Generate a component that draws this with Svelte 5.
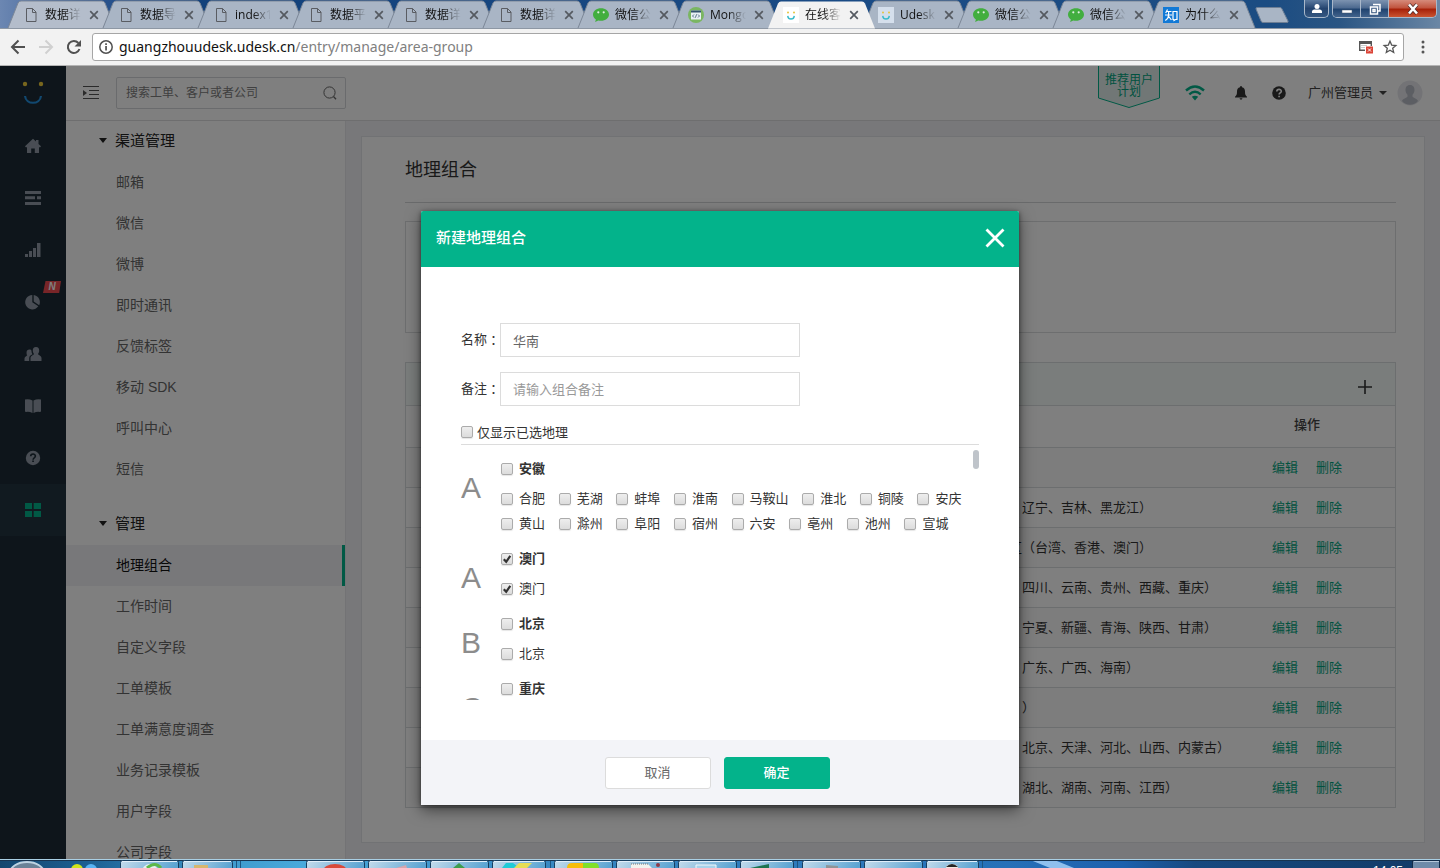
<script>
  const tabs = [
    { icon: 'file', title: '数据详情' },
    { icon: 'file', title: '数据导出' },
    { icon: 'file', title: 'index1.html' },
    { icon: 'file', title: '数据平台' },
    { icon: 'file', title: '数据详情' },
    { icon: 'file', title: '数据详情' },
    { icon: 'wechat', title: '微信公众' },
    { icon: 'mongo', title: 'Mongo' },
    { icon: 'udesk', title: '在线客服', active: true },
    { icon: 'udesk', title: 'Udesk' },
    { icon: 'wechat', title: '微信公众' },
    { icon: 'wechat', title: '微信公众' },
    { icon: 'zhihu', title: '为什么' }
  ];

  const rail = ['home', 'list', 'bars', 'pie', 'users', 'book', 'help', 'grid'];

  const menu = [
    { title: '渠道管理', items: ['邮箱', '微信', '微博', '即时通讯', '反馈标签', '移动 SDK', '呼叫中心', '短信'] },
    { title: '管理', items: ['地理组合', '工作时间', '自定义字段', '工单模板', '工单满意度调查', '业务记录模板', '用户字段', '公司字段'] }
  ];
  const current = '地理组合';

  const rows = [
    { lead: '', text: '' },
    { lead: '', text: '辽宁、吉林、黑龙江）' },
    { lead: '区', text: '（台湾、香港、澳门）' },
    { lead: '', text: '四川、云南、贵州、西藏、重庆）' },
    { lead: '', text: '宁夏、新疆、青海、陕西、甘肃）' },
    { lead: '', text: '广东、广西、海南）' },
    { lead: '', text: '）' },
    { lead: '', text: '北京、天津、河北、山西、内蒙古）' },
    { lead: '', text: '湖北、湖南、河南、江西）' }
  ];

  let groups = $state([
    {
      letter: 'A', name: '安徽', checked: false,
      cities: ['合肥', '芜湖', '蚌埠', '淮南', '马鞍山', '淮北', '铜陵', '安庆', '黄山', '滁州', '阜阳', '宿州', '六安', '亳州', '池州', '宣城']
        .map((name) => ({ name, checked: false }))
    },
    { letter: 'A', name: '澳门', checked: true, cities: [{ name: '澳门', checked: true }] },
    { letter: 'B', name: '北京', checked: false, cities: [{ name: '北京', checked: false }] },
    { letter: 'C', name: '重庆', checked: false, cities: [] }
  ]);

  let name = $state('华南');
  let note = $state('');
  let onlySelected = $state(false);

  const taskButtons = [
    [120, 58], [182, 50], [306, 58], [368, 58], [430, 58], [492, 53], [554, 58],
    [616, 58], [678, 58], [740, 53], [802, 58], [864, 58], [926, 52]
  ];
</script>

<div class="screen">
  <header class="strip">
    <div class="tabs">
      {#each tabs as tab}
        <div class="tab" class:active={tab.active}>
          <svg class="shape" viewBox="0 0 108 28" aria-hidden="true">
            <path d="M0 28 L10 3 Q11 1 13 1 H94 Q96 1 97 3 L107 28 Z" />
            <path class="edge" d="M0 28 L10 3 Q11 1 13 1 H94 Q96 1 97 3 L107 28" />
          </svg>
          <span class="fav">
            {#if tab.icon === 'file'}
              <svg viewBox="0 0 16 16"><path d="M3.5 1.5h6l3.500 3.500v9.500h-9.500z M9.500 1.500v4h3.500" fill="none" stroke="#5a5d63" /></svg>
            {:else if tab.icon === 'wechat'}
              <svg viewBox="0 0 16 16"><path d="M8 1.200c4.400 0 8 2.700 8 6.300s-3.600 6.300-8 6.300c-1 0-1.900-.1-2.700-.4l-3.200 1.500.8-2.500C1.100 11.300 0 9.500 0 7.500 0 3.900 3.600 1.200 8 1.200z" fill="#42ae3f" /><circle cx="5.300" cy="5.300" r="1.100" fill="#dfeee2" /><circle cx="10.700" cy="5.300" r="1.100" fill="#dfeee2" /></svg>
            {:else if tab.icon === 'mongo'}
              <svg viewBox="0 0 16 16"><circle cx="8" cy="8" r="8" fill="#7ab661" /><rect x="3" y="3.500" width="10" height="9" fill="#e9f0f4" /><path d="M3 3.500h10v2h-10z" fill="#33526d" /><path d="M6 7.500L4.500 9 6 10.500M10 7.500L11.500 9 10 10.500M8.600 7.300L7.400 10.700" fill="none" stroke="#33526d" stroke-width=".8" /></svg>
            {:else if tab.icon === 'udesk'}
              <svg viewBox="0 0 16 16"><path d="M0 0h16v16H0z" fill={tab.active ? '#fff' : '#d5dfec'} /><circle cx="5" cy="5.500" r="1" fill="#e6c43c" /><circle cx="11" cy="5.500" r="1" fill="#e6c43c" /><path d="M4.700 8.800c.5 4.300 6.100 4.300 6.600 0" fill="none" stroke="#3cbccb" stroke-width="1.400" /></svg>
            {:else}
              <svg viewBox="0 0 16 16"><path d="M0 0h16v16H0z" fill="#1179d6" /><path d="M4.500 2.500L2.700 6M3.800 4.500h4.700M2 8h7M5.600 4.500V8c0 2.500-1.600 4.500-3.300 5.500M5.800 9.500l2.600 3.500M10 4.500h4v8h-1.500l-1.500 1-.2-1H10z" fill="none" stroke="#fff" stroke-width="1.200" /></svg>
            {/if}
          </span>
          <span class="tab-title">{tab.title}</span>
          <button class="tab-close" aria-label="关闭标签页">
            <svg viewBox="0 0 10 10"><path d="M1.200 1.200l7.600 7.600M8.800 1.200L1.200 8.800" stroke="#555a61" stroke-width="1.700" /></svg>
          </button>
        </div>
      {/each}
      <button class="new-tab" aria-label="新标签页">
        <svg viewBox="0 0 34 16"><path d="M2.500 .5H25q1.500 0 2 1.500l6 12q.5 1.500-1 1.500H8q-1.500 0-2-1.500L1 2Q.5.5 2.500.5z" fill="#a9b5c5" stroke="#6e7f95" /></svg>
      </button>
    </div>
    <div class="window">
      <button class="user" aria-label="用户"><svg viewBox="0 0 12 12"><circle cx="6" cy="3.500" r="2.500" fill="#fff" /><path d="M1 10V8.500q0-1.500 2-2h6q2 .5 2 2V10z" fill="#fff" /></svg></button>
      <div class="controls">
        <button class="min" aria-label="最小化"><svg viewBox="0 0 12 12"><path d="M1 7h10v3H1z" fill="#fff" stroke="#4b5a70" stroke-width=".5" /></svg></button>
        <button class="max" aria-label="还原"><svg viewBox="0 0 12 12"><path d="M4 1.500h7v6.500H9M1.500 4h7v7h-7zM4 6.500h2v2H4z" fill="none" stroke="#fff" stroke-width="1.500" /></svg></button>
        <button class="close" aria-label="关闭"><svg viewBox="0 0 12 12"><path d="M2 1.500l8 9M10 1.500l-8 9" stroke="#4a2b2b" stroke-width="4" /><path d="M2 1.500l8 9M10 1.500l-8 9" stroke="#fff" stroke-width="2.600" /></svg></button>
      </div>
    </div>
  </header>

  <div class="toolbar">
    <button class="nav" aria-label="后退"><svg viewBox="0 0 16 16"><path d="M15 8H2.500M8.500 1.500L2 8l6.500 6.500" fill="none" stroke="#505050" stroke-width="2" /></svg></button>
    <button class="nav" aria-label="前进"><svg viewBox="0 0 16 16"><path d="M1 8h12.500M7.500 1.500L14 8l-6.500 6.500" fill="none" stroke="#d0d0d0" stroke-width="2" /></svg></button>
    <button class="nav" aria-label="刷新"><svg viewBox="0 0 16 16"><path d="M13.500 10A6 6 0 1 1 12.400 4" fill="none" stroke="#505050" stroke-width="2" /><path d="M15 1v6.500H8.500z" fill="#505050" /></svg></button>
    <div class="omnibox">
      <svg class="info" viewBox="0 0 14 14"><circle cx="7" cy="7" r="6.200" fill="none" stroke="#505050" stroke-width="1.500" /><path d="M6.200 6h1.700v4.500H6.200zM6.200 3.200h1.700v1.700H6.200z" fill="#505050" /></svg>
      <span class="url">guangzhouudesk.udesk.cn<span>/entry/manage/area-group</span></span>
      <button class="blocked" aria-label="已拦截弹出式窗口"><svg viewBox="0 0 16 14"><path d="M1.700 2v8.300H7M13.300 2v4" fill="none" stroke="#555" stroke-width="1.400" /><path d="M1 1h13v3H1z" fill="#555" /><path d="M3 5.500h6M3 7.500h4" stroke="#ccc" /><rect x="8" y="6.500" width="7" height="7" fill="#db4437" /><path d="M10 8.500l3 3M13 8.500l-3 3" stroke="#fff" /></svg></button>
      <button class="star" aria-label="收藏"><svg viewBox="0 0 14 14"><path d="M7 1.200l1.700 3.900 4.200.4-3.200 2.800 1 4.200L7 10.300l-3.700 2.200 1-4.200L1.100 5.500l4.200-.4z" fill="none" stroke="#555" stroke-width="1.300" /></svg></button>
    </div>
    <button class="more" aria-label="菜单"><svg viewBox="0 0 4 14"><circle cx="2" cy="2" r="1.500" /><circle cx="2" cy="7" r="1.500" /><circle cx="2" cy="12" r="1.500" /></svg></button>
  </div>

  <div class="page">
    <nav class="rail">
      <a class="logo" href="#home" aria-label="Udesk"><svg viewBox="0 0 24 26"><circle cx="4" cy="4" r="2.200" fill="#f0cd3c" /><circle cx="20" cy="4" r="2.200" fill="#f0cd3c" /><path d="M4 16c1 9 15 9 16 0" fill="none" stroke="#2390e0" stroke-width="2.200" /></svg></a>
      {#each rail as icon}
        <a class="rail-item" class:on={icon === 'grid'} href="#{icon}" aria-label={icon}>
          <svg viewBox="0 0 16 16" fill="currentColor">
            {#if icon === 'home'}
              <path d="M8 .8L11 3.600V2h2.500v4L16 8.300l-.8.9H14V15H9.800v-4.500H6.200V15H2V9.200H.8L0 8.300z" />
            {:else if icon === 'list'}
              <path d="M0 1h16v3H0zM0 6.300h10v3H0zM12 6.300h4v3h-4zM0 12h16v3H0z" />
            {:else if icon === 'bars'}
              <path d="M0 12h3v3H0zM4 9h3v6H4zM8 6h3v9H8zM12 1h3.500v14H12z" />
            {:else if icon === 'pie'}
              <path d="M7.300 1v7.300l6 4A7.200 7.200 0 1 1 7.300 1zM8.700 1a7.200 7.200 0 0 1 5.500 10.200L8.700 7.500z" />
            {:else if icon === 'users'}
              <path d="M11 1c2.300 0 3.300 1.600 3.200 3.700-.1 1.700-.8 2.600-1.200 3.300 0 1 3.500 1.500 3.500 4V15h-11v-3c0-2.500 3.500-3 3.500-4-.4-.7-1.100-1.600-1.200-3.300C7.700 2.600 8.700 1 11 1zM4.500 3.500c1 0 1.700.4 2 1.200 0 1.600.3 2.600 1 3.600-1.800.9-3.300 1.900-3.300 4V15H-.5v-2.500c0-2 2.500-2.300 2.700-3.200C1.500 8.500 1.500 7.300 1.600 6c.1-1.500 1-2.500 2.900-2.500z" />
            {:else if icon === 'book'}
              <path d="M0 1.500q4-.8 7.500 1V15Q4 13.300 1 14 0 14 0 13zM16 1.500q-4-.8-7.500 1V15q3.500-1.700 6.500-1 1 0 1-1z" />
            {:else if icon === 'help'}
              <circle cx="8" cy="8" r="7.200" />
              <path d="M5.700 6.300c0-3 4.700-3 4.700-.2 0 1.900-2.300 1.700-2.300 3.600M7.200 11.300h1.700" fill="none" stroke="#1c2b36" stroke-width="1.600" />
            {:else}
              <path d="M0 1h7v6H0zM8.700 1H16v6H8.700zM0 9h7v6H0zM8.700 9H16v6H8.700z" />
            {/if}
          </svg>
          {#if icon === 'pie'}<span class="badge">N</span>{/if}
        </a>
      {/each}
    </nav>

    <div class="app">
      <div class="topbar">
        <button class="fold" aria-label="收起菜单"><svg viewBox="0 0 16 14"><path d="M0 .5h16M6 4.500h10M6 8.500h10M0 12.500h16" stroke="#555" /><path d="M0 4l4 3-4 3z" fill="#555" /></svg></button>
        <label class="search">
          <input type="text" placeholder="搜索工单、客户或者公司" aria-label="搜索" />
          <svg viewBox="0 0 14 14"><circle cx="6.500" cy="6.500" r="5.600" fill="none" stroke="#666" /><path d="M10.500 10.500L13 13.300" stroke="#666" stroke-width="1.300" /></svg>
        </label>
        <a class="promo" href="#promo">
          <svg viewBox="0 0 62 42" aria-hidden="true"><path d="M.5-1V32L31 41.500 61.500 32V-1z" fill="#e2efec" stroke="#03b38b" /></svg>
          <span>推荐用户<br />计划</span>
        </a>
        <svg class="wifi" viewBox="0 0 20 16"><path d="M1 5.500q9-8 18 0M4.300 9.300q5.700-5 11.400 0" fill="none" stroke="#03b38b" stroke-width="2.400" /><path d="M6.800 11.800q3.200-2.300 6.400 0L10 15.500z" fill="#03b38b" /></svg>
        <svg class="bell" viewBox="0 0 12 14"><path d="M6 0q1 0 1 1.300c2.200.5 3 2.200 3 4.200 0 3 .5 4 2 5.200V11.500H0v-.8C1.500 9.500 2 8.500 2 5.500c0-2 .8-3.700 3-4.200Q5 0 6 0zM4.500 12.300h3q-.3 1.400-1.500 1.400t-1.500-1.400z" fill="#333" /></svg>
        <svg class="ask" viewBox="0 0 14 14"><circle cx="7" cy="7" r="6.800" fill="#333" /><path d="M4.800 5.500c0-2.800 4.500-2.800 4.500-.2 0 1.700-2.200 1.600-2.200 3.300M6.300 10.500h1.600" fill="none" stroke="#fff" stroke-width="1.600" /></svg>
        <button class="account">广州管理员<i></i></button>
        <svg class="avatar" viewBox="0 0 26 26"><circle cx="13" cy="13" r="12.500" fill="#e6e7ec" /><path d="M13 5c3.300 0 4.600 2.400 4.500 5.200-.1 2.200-1.200 3.700-2 4.500v1.800c0 1.300 4.500 1.700 5.500 4.500-4 5-12 5-16 0 1-2.800 5.500-3.200 5.500-4.500v-1.800c-.8-.8-1.900-2.300-2-4.500C8.400 7.400 9.700 5 13 5z" fill="#b9bcc6" /></svg>
      </div>

      <div class="columns">
        <aside>
          {#each menu as group}
            <section>
              <h3>{group.title}</h3>
              {#each group.items as item}
                <a href="#menu" class:current={item === current}>{item}</a>
              {/each}
            </section>
          {/each}
        </aside>

        <main>
          <div class="panel">
            <h1>地理组合</h1>
            <div class="hint"></div>
            <div class="listing">
              <div class="listing-head">
                <button aria-label="新建"><svg viewBox="0 0 14 14"><path d="M7 0v14M0 7h14" stroke="#333" stroke-width="1.600" /></svg></button>
              </div>
              <table>
                <thead><tr><th></th><th>操作</th></tr></thead>
                <tbody>
                  {#each rows as row}
                    <tr>
                      <td><span class="lead">{row.lead}</span>{row.text}</td>
                      <td class="ops"><a href="#edit">编辑</a><a href="#delete">删除</a></td>
                    </tr>
                  {/each}
                </tbody>
              </table>
            </div>
          </div>
        </main>
      </div>
    </div>

    <div class="backdrop">
      <div class="dialog" role="dialog" aria-labelledby="dialog-title">
        <div class="dialog-head">
          <h2 id="dialog-title">新建地理组合</h2>
          <button aria-label="关闭"><svg viewBox="0 0 20 20"><path d="M1.500 1.500l17 17M18.500 1.500l-17 17" stroke="#fff" stroke-width="2.800" /></svg></button>
        </div>
        <div class="dialog-body">
          <div class="field"><label for="name">名称<span class="colon">：</span></label><input id="name" type="text" bind:value={name} /></div>
          <div class="field"><label for="note">备注<span class="colon">：</span></label><input id="note" type="text" placeholder="请输入组合备注" bind:value={note} /></div>
          <label class="only"><input type="checkbox" bind:checked={onlySelected} />仅显示已选地理</label>
          <div class="areas">
            {#each groups as group}
              <div class="group">
                <span class="letter">{group.letter}</span>
                <div>
                  <label class="province"><input type="checkbox" bind:checked={group.checked} />{group.name}</label>
                  <div class="cities">
                    {#each group.cities as city}
                      <label><input type="checkbox" bind:checked={city.checked} />{city.name}</label>{' '}
                    {/each}
                  </div>
                </div>
              </div>
            {/each}
            <span class="thumb"></span>
          </div>
        </div>
        <div class="dialog-foot">
          <button>取消</button>
          <button class="primary">确定</button>
        </div>
      </div>
    </div>
  </div>

  <footer class="taskbar">
    <svg viewBox="0 0 1440 9" preserveAspectRatio="xMinYMin slice" aria-hidden="true">
      <defs>
        <linearGradient id="bar">
          <stop offset="0" stop-color="#14476f" /><stop offset=".06" stop-color="#1c5f92" />
          <stop offset=".16" stop-color="#3f9bce" /><stop offset=".21" stop-color="#49a9db" />
          <stop offset=".4" stop-color="#3585c0" /><stop offset=".7" stop-color="#2670b8" />
          <stop offset=".78" stop-color="#1c60ad" /><stop offset=".83" stop-color="#17497f" /><stop offset="1" stop-color="#123a66" />
        </linearGradient>
        <linearGradient id="btn" x2="1" y2=".15">
          <stop offset="0" stop-color="#c5dcec" /><stop offset="1" stop-color="#5ba4d2" />
        </linearGradient>
      </defs>
      <rect width="1440" height="9" fill="url(#bar)" />
      <path d="M1028 0h24l22 9h-24z" fill="#8fc0ee" />
      <rect width="1440" height="1" fill="#a9cfe4" /><rect y="1" width="1440" height="1" fill="#173450" />
      {#each taskButtons as [x, w]}
        <rect x={x + .5} y="1.500" width={w} height="12" rx="2" fill="url(#btn)" stroke="#173f60" />
        <path d="M{x + 2} 2.500h{w - 3}" stroke="#e1effa" />
      {/each}
      <path d="M236.500 2v7M240.500 2v7M550.500 2v7M797.500 2v7M982.500 2v7" stroke="#1d5682" />
      <ellipse cx="27" cy="14" rx="17" ry="11" fill="#6a8297" stroke="#bdd3e2" stroke-width="2" />
      <circle cx="77" cy="11" r="6" fill="#d2e51b" /><circle cx="91" cy="11" r="6" fill="#58b3f4" />
      <circle cx="150" cy="13" r="8" fill="#e5f1f0" /><path d="M147 9q8-7 14 0" fill="none" stroke="#5db848" stroke-width="3" />
      <rect x="194" y="6" width="14" height="4" fill="#d8b66e" />
      <ellipse cx="335" cy="12" rx="12" ry="7" fill="#da4a3a" />
      <path d="M396 9l10-3 1 3z" fill="#d6a6ae" /><path d="M453 9l6-5 6 5z" fill="#3d9d4e" />
      <path d="M502 9l4-5h7l4 3 3-3h8l-7 5z" fill="#1fcbd6" /><path d="M519 4h13l-5 5h-13z" fill="#e6de55" />
      <path d="M567 9q0-5 5-5h11v5z" fill="#f5bd0a" /><path d="M583 4h12q4 0 4 5h-16z" fill="#80df2a" />
      <path d="M631 5h17l4 4h-21z" fill="#f2f2ee" /><path d="M631 5h17" stroke="#777" stroke-dasharray="1 1" /><circle cx="658" cy="6" r="2" fill="#8f3a48" />
      <path d="M696 9V6h20v3" fill="#a8d2ea" stroke="#f2f8fb" /><path d="M750 9l19-4v4z" fill="#1c7350" />
      <path d="M826 6l12 1v2h-12z" fill="#8f9497" /><ellipse cx="952" cy="9" rx="6" ry="4" fill="#f1e7df" /><path d="M946 8q6-6 12 0z" fill="#252424" />
      <text x="1373" y="16" fill="#fff" font-size="12" font-family="Liberation Sans, Noto Sans CJK SC, sans-serif">14:05</text>
      <rect x="1412.500" y="1.500" width="27" height="10" fill="#6f8ba9" stroke="#132c49" /><path d="M1414 2.500h25" stroke="#b6c8da" />
    </svg>
  </footer>
</div>

<style>
  :global(body) { margin: 0; }
  .screen, .screen * { box-sizing: border-box; }
  .screen {
    display: flex; flex-direction: column; height: 100vh; overflow: hidden;
    font: 14px/20px "Liberation Sans", "Noto Sans CJK SC", sans-serif; color: #333;
  }
  svg { display: block; flex: none; overflow: visible; }
  button { padding: 0; border: 0; background: none; font: inherit; color: inherit; }
  a { color: inherit; text-decoration: none; }
  input { font: inherit; margin: 0; }
  h1, h2, h3 { margin: 0; font-weight: 400; }

  .strip {
    display: flex; justify-content: space-between; height: 29px; flex: none; padding-left: 8px;
    background: linear-gradient(90deg, #6c87b2 0, #2c5590 90px, #12417b 200px, #1a4b85 60%, #1b4c82 88%, #2a5583 93%, #6b87a5);
    border-bottom: 1px solid #8d97a4;
  }
  .tabs { display: flex; height: 28px; }
  .tab { position: relative; display: flex; align-items: center; width: 108px; margin-right: -13px; padding: 2px 17px 0 15px; height: 28px; }
  .tab.active { z-index: 1; height: 29px; padding-bottom: 1px; }
  .shape { position: absolute; inset: 0; width: 108px; height: 28px; fill: #a9b5c5; }
  .tab:first-child .shape { fill: #b4bdcb; }
  .shape .edge { fill: none; stroke: #7c8797; }
  .active .shape { fill: #f2f2f2; height: 29px; }
  .active .edge { stroke: none; }
  .fav { position: relative; width: 16px; margin-right: 6px; }
  .fav svg { width: 16px; height: 16px; }
  .tab-title {
    position: relative; width: 36px; overflow: hidden; white-space: nowrap; font-size: 12px; line-height: 18px; color: #111;
    font-family: "Open Sans", "Noto Sans CJK SC", sans-serif;
    mask-image: linear-gradient(90deg, #000 50%, transparent);
  }
  .tab-close { position: relative; margin-left: 8px; }
  .tab-close svg { width: 10px; height: 10px; }
  .new-tab { margin: 7px 0 0 12px; align-self: flex-start; }
  .new-tab svg { width: 34px; height: 16px; }
  .window { display: flex; gap: 3px; padding-right: 3px; height: 18px; }
  .window button { display: grid; place-items: center; height: 18px; }
  .window svg { width: 12px; height: 12px; }
  .user, .controls { border: 1px solid #a9b8ca; border-top: 0; border-radius: 0 0 5px 5px; overflow: hidden; }
  .user { width: 25px; background: linear-gradient(#5d7ba0, #24446f 50%, #345781); }
  .controls { display: flex; height: 18px; }
  .min, .max { width: 28px; background: linear-gradient(#7d93b0, #4b688e 45%, #1f426e 50%, #466790); border-right: 1px solid #a9b8ca; }
  .close { width: 47px; background: linear-gradient(#d68b7b, #c0523c 45%, #a62008 50%, #cf5a35); }

  .toolbar {
    display: flex; align-items: center; height: 37px; flex: none; padding: 0 15px 0 10px;
    background: #f2f2f2; border-bottom: 1px solid #b4b4b4;
  }
  .nav { margin-right: 12px; }
  .nav svg { width: 16px; height: 16px; }
  .nav:nth-child(3) { margin-right: 10px; }
  .omnibox { display: flex; flex: 1; align-items: center; height: 28px; padding: 0 6px; border: 1px solid #a6a6a6; border-radius: 3px; background: #fff; }
  .info { width: 14px; height: 14px; margin-right: 6px; }
  .url { flex: 1; font: 14px/20px "Noto Sans", sans-serif; color: #111; }
  .url span { color: #808080; }
  .blocked { margin-right: 9px; }
  .blocked svg { width: 16px; height: 14px; }
  .star svg { width: 14px; height: 14px; }
  .more { margin-left: 17px; }
  .more svg { width: 4px; height: 14px; fill: #555; }

  .page { position: relative; display: flex; flex: 1; min-height: 0; overflow: hidden; }
  .rail { width: 66px; flex: none; background: #1c2b36; color: #929ba8; }
  .logo { display: grid; place-items: center; height: 54px; }
  .logo svg { width: 24px; height: 26px; }
  .rail-item { position: relative; display: grid; place-items: center; height: 52px; }
  .rail-item svg { width: 16px; height: 16px; }
  .rail-item.on { background: #233440; color: #03b38b; }
  .badge {
    position: absolute; left: 43px; top: 5px; width: 18px; height: 12px; background: #f04a50; color: #fff;
    font: italic bold 10px/12px "Liberation Sans", sans-serif; text-align: center; clip-path: polygon(14% 0, 100% 0, 90% 100%, 0 100%);
  }

  .app { display: flex; flex-direction: column; flex: 1; min-width: 0; }
  .topbar { display: flex; align-items: center; flex: none; height: 55px; padding: 0 17px 0 17px; border-bottom: 1px solid #dcdcde; background: #fff; }
  .fold svg { width: 16px; height: 14px; }
  .search { display: flex; align-items: center; width: 230px; height: 32px; margin-left: 17px; padding: 0 8px 0 9px; border: 1px solid #d5d7da; border-radius: 2px; }
  .search input { flex: 1; min-width: 0; border: 0; padding: 0; background: none; outline: 0; font-size: 12px; }
  .search input::placeholder { color: #808080; opacity: 1; }
  .search svg { width: 14px; height: 14px; }
  .promo { position: relative; align-self: flex-start; width: 62px; height: 42px; margin-left: auto; color: #03a581; font-size: 12px; line-height: 12px; text-align: center; }
  .promo svg { width: 62px; height: 42px; position: absolute; inset: 0; }
  .promo span { position: relative; display: block; padding-top: 8px; }
  .wifi { width: 20px; height: 16px; margin-left: 25px; }
  .bell { width: 12px; height: 14px; margin-left: 30px; }
  .ask { width: 14px; height: 14px; margin-left: 25px; }
  .account { display: flex; align-items: center; margin-left: 22px; font-size: 13px; color: #444; white-space: nowrap; }
  .account i { margin-left: 6px; border: 4px solid transparent; border-top-color: #444; border-bottom: 0; }
  .avatar { width: 26px; height: 26px; margin-left: 10px; }

  .columns { display: flex; flex: 1; min-height: 0; background: #f0f0f5; }
  aside { width: 280px; flex: none; overflow: hidden; background: #fff; border-right: 1px solid #e6e6ea; }
  section { padding-bottom: 14px; }
  h3 { display: flex; align-items: center; height: 41px; padding: 0 0 2px 33px; font-size: 15px; color: #222; }
  h3::before { content: ""; margin-right: 8px; border: 4px solid transparent; border-top: 5px solid #222; border-bottom: 0; }
  aside a { display: block; height: 41px; padding-left: 50px; line-height: 41px; color: #666; }
  aside a.current { background: #f0f0f5; border-right: 3px solid #03b38b; color: #111; }

  main { flex: 1; min-width: 0; padding: 15px 15px 16px 15px; }
  .panel { height: 100%; padding: 0 28px 0 43px; background: #fff; border: 1px solid #e3e4e8; }
  h1 { height: 66px; padding-top: 20px; font-size: 18px; line-height: 26px; border-bottom: 1px solid #d2d4d6; }
  .hint { height: 112px; margin-top: 18px; border: 1px solid #dadcde; }
  .listing { margin-top: 29px; border: 1px solid #d8dcde; }
  .listing-head { display: flex; align-items: center; justify-content: flex-end; height: 43px; padding: 6px 23px 0 0; background: #f5faf9; border-bottom: 1px solid #d8dcde; }
  .listing-head svg { width: 14px; height: 14px; }
  table { width: 100%; border-collapse: collapse; table-layout: fixed; font-size: 13px; }
  th, td { height: 40px; padding: 2px 0 0; border-bottom: 1px solid #d8dcde; font-weight: 400; }
  th { height: 41px; padding: 0 0 2px; font-weight: 500; color: #444; }
  th:last-child { width: 176px; }
  td:first-child { padding-left: 603px; white-space: nowrap; }
  tbody tr:nth-child(odd) { background: #fafafa; }
  tbody tr:last-child td { border-bottom: 0; }
  .lead { display: inline-block; width: 13px; height: 20px; vertical-align: top; }
  .ops { text-align: center; color: #03a581; }
  .ops a + a { margin-left: 18px; }

  .backdrop { position: absolute; inset: 0; display: flex; justify-content: center; align-items: flex-start; padding-top: 145px; background: rgba(0, 0, 0, .5); }
  .dialog { width: 598px; max-width: 90%; background: #fff; border-radius: 2px 2px 0 0; box-shadow: 0 5px 15px rgba(0, 0, 0, .5), 0 1px 4px rgba(0, 0, 0, .5); font-size: 13px; }
  .dialog-head { display: flex; align-items: center; justify-content: space-between; height: 56px; padding: 0 14px 3px 15px; background: #03b38b; border-radius: 2px 2px 0 0; color: #fff; }
  h2 { font-size: 15px; font-weight: 500; }
  .dialog-head svg { width: 20px; height: 20px; }
  .dialog-body { padding: 56px 40px 40px; }
  .field { display: flex; align-items: center; height: 34px; margin-bottom: 15px; }
  .field label { width: 39px; white-space: nowrap; }
  .colon { font-family: "Noto Sans CJK TC", sans-serif; }
  .field input { width: 300px; height: 34px; padding: 0 12px; border: 1px solid #dcdcdc; color: #666; outline: 0; }
  .field input::placeholder { color: #999; opacity: 1; }
  label { display: inline-flex; align-items: center; }
  input[type="checkbox"] {
    appearance: none; flex: none; width: 12px; height: 12px; margin-right: 6px;
    border: 1px solid #ababab; border-radius: 2px; background: linear-gradient(#eee, #dcdcdc);
    box-shadow: 0 1px 1px rgba(0, 0, 0, .1);
  }
  input[type="checkbox"]:checked {
    background: url("data:image/svg+xml,%3Csvg xmlns='http://www.w3.org/2000/svg' viewBox='0 0 10 10'%3E%3Cpath d='M1.800 5.200l2.400 2.600L8.300 1.800' fill='none' stroke='%23333' stroke-width='2.200'/%3E%3C/svg%3E") center / 10px no-repeat, linear-gradient(#eee, #dcdcdc);
  }
  .only { display: flex; height: 24px; border-bottom: 1px solid #dcdcdc; }
  .only input { margin: 0 4px 2px 0; }
  .areas { position: relative; height: 255px; padding-top: 11px; overflow: hidden; }
  .group { display: flex; padding-bottom: 10px; }
  .letter { width: 40px; height: 50px; flex: none; color: #8c8c8c; font-size: 30px; line-height: 64px; }
  .province { display: flex; height: 25px; margin-bottom: 5px; font-weight: 700; }
  .cities label { height: 25px; margin-right: 10px; vertical-align: top; }
  .thumb { position: absolute; right: 0; top: 5px; width: 6px; height: 19px; border-radius: 3px; background: #bfc4ca; }
  .dialog-foot { display: flex; justify-content: center; gap: 13px; padding: 17px 6px 16px 0; background: #f3f4f8; }
  .dialog-foot button { width: 106px; height: 32px; border: 1px solid #dcdcdc; border-radius: 3px; background: #fff; color: #666; }
  .dialog-foot .primary { background: #03b38b; border-color: #03b38b; color: #fff; font-weight: 500; }

  .taskbar { height: 9px; flex: none; overflow: hidden; }
  .taskbar svg { width: 100%; height: 9px; }
</style>
